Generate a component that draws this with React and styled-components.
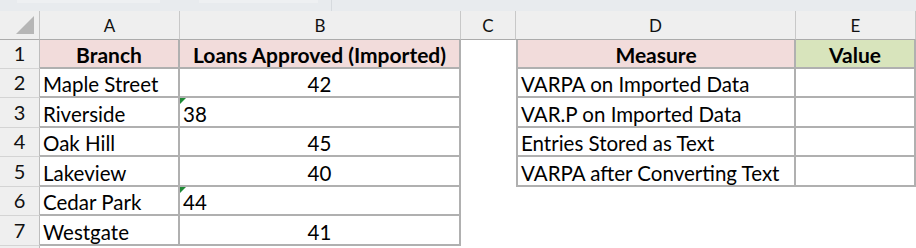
import React from "react";
import styled, { createGlobalStyle } from "styled-components";

const Global = createGlobalStyle`
  html, body { margin: 0; padding: 0; background: #ffffff; }
  body { font-family: Lato, "Liberation Sans", sans-serif; }
`;

const Page = styled.div`
  width: 916px;
  height: 248px;
  overflow: hidden;
  background: #ffffff;
  display: flex;
  flex-direction: column;
`;

const TopStrip = styled.div`
  height: 11px;
  flex: none;
  background: #e8ebee;
  display: flex;
  align-items: flex-start;
`;

const StripBox = styled.div`
  height: 3px;
  width: ${(p) => p.$w}px;
  margin-left: ${(p) => p.$ml}px;
  background: #eef0f2;
`;

const StripRule = styled.div`
  width: 1px;
  height: 11px;
  margin-left: ${(p) => p.$ml}px;
  background: #d6dade;
`;

const Sheet = styled.div`
  display: grid;
  grid-template-columns: 40px 140px 281px 55px 280px 120px;
  grid-template-rows: 29px 29px 29px 30px 29px 30px 29px 30px 1fr;
  flex: 1;
`;

const Corner = styled.div`
  background: #efefef;
  border-right: 1px solid #c4c4c4;
  border-bottom: 1px solid #ababab;
  box-sizing: border-box;
  position: relative;
`;

const CornerTri = styled.div`
  position: absolute;
  right: 5px;
  bottom: 5px;
  width: 0;
  height: 0;
  border-left: 18px solid transparent;
  border-bottom: 18px solid #b6b6b6;
`;

const ColHead = styled.div`
  background: #efefef;
  border-right: 1px solid #c8c8c8;
  border-bottom: 1px solid #ababab;
  box-sizing: border-box;
  display: flex;
  align-items: center;
  justify-content: center;
  font-size: 17px;
  color: #111;
  padding-top: 1px;
`;

const RowHead = styled.div`
  background: #efefef;
  border-right: 1px solid #bdbdbd;
  border-bottom: 1px solid #d4d4d4;
  box-sizing: border-box;
  display: flex;
  align-items: flex-end;
  justify-content: center;
  padding-bottom: 5px;
  font-size: 20px;
  line-height: 1;
  color: #111;
`;

const RowHeadFill = styled(RowHead)`
  border-bottom: none;
`;

const Cell = styled.div`
  position: relative;
  box-sizing: border-box;
  background: ${(p) => p.$bg || "#ffffff"};
  ${(p) =>
    p.$boxed
      ? `border-right: 2px solid #b0b0b0; border-bottom: 2px solid #b0b0b0;`
      : ""}
  ${(p) => (p.$left ? `border-left: 2px solid #b0b0b0;` : "")}
  display: flex;
  align-items: flex-end;
  justify-content: ${(p) =>
    p.$align === "center" ? "center" : p.$align === "right" ? "flex-end" : "flex-start"};
  padding: 0 3px 2px 3px;
  font-size: ${(p) => (p.$bold ? "21px" : "20.5px")};
  line-height: 1;
  font-weight: ${(p) => (p.$bold ? 700 : 400)};
  color: #000;
  white-space: nowrap;
  overflow: hidden;
`;

const TextFlag = styled.span`
  position: absolute;
  left: 0;
  top: 0;
  width: 0;
  height: 0;
  border-top: 6px solid #1f8a36;
  border-right: 6px solid transparent;
`;

const left = [
  ["Branch", "Loans Approved (Imported)"],
  ["Maple Street", "42"],
  ["Riverside", "38", true],
  ["Oak Hill", "45"],
  ["Lakeview", "40"],
  ["Cedar Park", "44", true],
  ["Westgate", "41"],
];

const right = [
  ["Measure", "Value"],
  ["VARPA on Imported Data", ""],
  ["VAR.P on Imported Data", ""],
  ["Entries Stored as Text", ""],
  ["VARPA after Converting Text", ""],
];

export default function App() {
  const rows = [];
  for (let i = 0; i < 7; i++) {
    const [a, b, asText] = left[i];
    const hdr = i === 0;
    const r = right[i];
    rows.push(
      <React.Fragment key={i}>
        <RowHead>{i + 1}</RowHead>
        <Cell $boxed $bg={hdr ? "#f2dcdb" : undefined} $bold={hdr} $align={hdr ? "center" : "left"}>
          {a}
        </Cell>
        <Cell
          $boxed
          $bg={hdr ? "#f2dcdb" : undefined}
          $bold={hdr}
          $align={hdr || !asText ? "center" : "left"}
        >
          {asText && <TextFlag />}
          {b}
        </Cell>
        <Cell />
        {r ? (
          <Cell $boxed $left $bg={hdr ? "#f2dcdb" : undefined} $bold={hdr} $align={hdr ? "center" : "left"}>
            {r[0]}
          </Cell>
        ) : (
          <Cell />
        )}
        {r ? (
          <Cell $boxed $bg={hdr ? "#d8e4bc" : undefined} $bold={hdr} $align="center">
            {r[1]}
          </Cell>
        ) : (
          <Cell />
        )}
      </React.Fragment>
    );
  }
  return (
    <Page>
      <Global />
      <TopStrip>
        <StripBox $ml={17} $w={143} />
        <StripBox $ml={39} $w={119} />
        <StripRule $ml={13} />
      </TopStrip>
      <Sheet>
        <Corner>
          <CornerTri />
        </Corner>
        {["A", "B", "C", "D", "E"].map((c) => (
          <ColHead key={c}>{c}</ColHead>
        ))}
        {rows}
        <RowHeadFill />
      </Sheet>
    </Page>
  );
}
